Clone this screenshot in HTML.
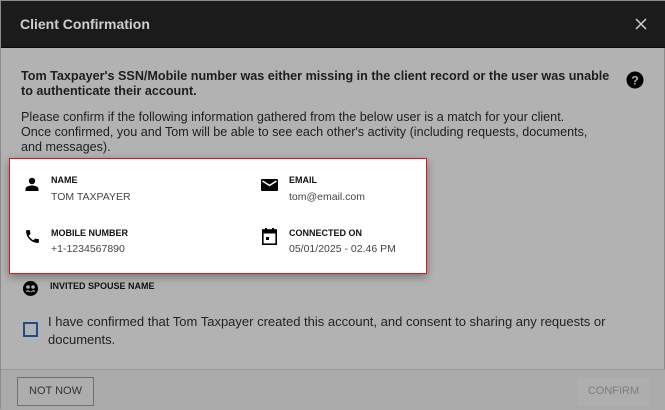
<!DOCTYPE html>
<html><head><style>
*{margin:0;padding:0;box-sizing:border-box}
body{width:665px;height:409px;overflow:hidden;background:#b2b2b2;font-family:"Liberation Sans",sans-serif;position:relative;border:1px solid #8a8a8a}
.hdr{position:absolute;left:0;top:0;width:665px;height:47px;background:#1b1b1b;border-bottom:1px solid #0a0a0a}
.hdr .t{position:absolute;left:19px;top:15px;color:#cfcfcf;font-weight:bold;font-size:14px}
.p{position:absolute;left:20px;color:#1e1e1e;font-size:12.6px;line-height:15px}
.card{position:absolute;left:8px;top:157px;width:418px;height:116px;background:#fff;border:1px solid #e0141c;box-shadow:0 3px 8px rgba(0,0,0,.35)}
.lb{position:absolute;font-size:9px;font-weight:bold;color:#111}
.vl{position:absolute;font-size:10.5px;color:#444}
.ic{position:absolute}
.foot{position:absolute;left:0;top:368px;width:665px;height:41px;background:#aaaaaa;border-top:1px solid #9a9a9a}
.btn{position:absolute;left:16px;top:376px;width:77px;height:29px;border:1px solid #6f6f6f;font-size:11px;color:#333;text-align:center;line-height:27px;background:#adadad}
.cf{position:absolute;left:576px;top:376px;width:73px;height:29px;background:#aeaeae;font-size:11px;color:#7d7d7d;text-align:center;line-height:29px}
</style></head><body>
<div class="hdr"><div class="t">Client Confirmation</div>
<svg style="position:absolute;left:634px;top:17px" width="12" height="12" viewBox="0 0 12 12"><path d="M1 1L11 11M11 1L1 11" stroke="#d0d0d0" stroke-width="1.5"/></svg></div>
<div class="p" style="top:68px;font-weight:bold;width:590px">Tom Taxpayer's SSN/Mobile number was either missing in the client record or the user was unable to authenticate their account.</div>
<svg style="position:absolute;left:625px;top:70px" width="18" height="18" viewBox="0 0 18 18"><circle cx="9" cy="9" r="8.5" fill="#000"/><text x="9" y="13.5" font-size="12" font-weight="bold" fill="#b2b2b2" text-anchor="middle" font-family="Liberation Sans">?</text></svg>
<div class="p" style="top:109px;width:572px">Please confirm if the following information gathered from the below user is a match for your client. Once confirmed, you and Tom will be able to see each other's activity (including requests, documents, and messages).</div>
<div class="card">
<svg class="ic" style="left:15px;top:18px" width="14" height="14" viewBox="0 0 14 14"><circle cx="7" cy="4" r="3.2" fill="#000"/><path d="M0.5 14V12C0.5 9.5 4 8.5 7 8.5S13.5 9.5 13.5 12V14Z" fill="#000"/></svg>
<div class="lb" style="left:41px;top:16px">NAME</div><div class="vl" style="left:41px;top:32px">TOM TAXPAYER</div>
<svg class="ic" style="left:251px;top:20px" width="17" height="12" viewBox="0 0 17 12"><rect width="17" height="12" rx="1" fill="#000"/><path d="M1.5 2L8.5 6.5L15.5 2" stroke="#fff" stroke-width="1.5" fill="none"/></svg>
<div class="lb" style="left:279px;top:16px">EMAIL</div><div class="vl" style="left:279px;top:32px">tom@email.com</div>
<svg class="ic" style="left:14px;top:69px" width="17" height="17" viewBox="0 0 24 24"><path d="M6.6 10.8c1.4 2.8 3.8 5.1 6.6 6.6l2.2-2.2c.3-.3.7-.4 1-.2 1.1.4 2.3.6 3.6.6.6 0 1 .4 1 1V20c0 .6-.4 1-1 1C10.6 21 3 13.4 3 4c0-.6.4-1 1-1h3.5c.6 0 1 .4 1 1 0 1.3.2 2.5.6 3.6.1.3 0 .7-.2 1z" fill="#000"/></svg>
<div class="lb" style="left:41px;top:69px">MOBILE NUMBER</div><div class="vl" style="left:41px;top:84px">+1-1234567890</div>
<svg class="ic" style="left:252px;top:69px" width="15" height="17" viewBox="0 0 15 17"><rect x="3" y="0" width="2" height="3" fill="#000"/><rect x="10" y="0" width="2" height="3" fill="#000"/><rect x="0.8" y="2" width="13.4" height="14.2" fill="none" stroke="#000" stroke-width="1.6"/><rect x="0.8" y="2" width="13.4" height="3.5" fill="#000"/><rect x="4" y="9" width="3" height="3" fill="#000"/></svg>
<div class="lb" style="left:279px;top:69px">CONNECTED ON</div><div class="vl" style="left:279px;top:84px">05/01/2025 - 02.46 PM</div>
</div>
<svg style="position:absolute;left:22px;top:280px" width="15" height="15" viewBox="0 0 15 15"><circle cx="7.5" cy="7.5" r="7.5" fill="#000"/><circle cx="5" cy="6" r="1.8" fill="#b2b2b2"/><circle cx="10" cy="6" r="1.8" fill="#b2b2b2"/><path d="M3 10.5Q5 9 7 11M8 11Q10 9 12 10.5" stroke="#b2b2b2" stroke-width="1.2" fill="none"/></svg>
<div class="lb" style="left:49px;top:280px">INVITED SPOUSE NAME</div>
<div style="position:absolute;left:22px;top:321px;width:15px;height:15px;border:2px solid #1d4f86"></div>
<div class="p" style="left:47px;top:312px;width:570px;font-size:13px;line-height:18px;color:#222">I have confirmed that Tom Taxpayer created this account, and consent to sharing any requests or documents.</div>
<div class="foot"></div>
<div class="btn">NOT NOW</div>
<div class="cf">CONFIRM</div>
</body></html>
